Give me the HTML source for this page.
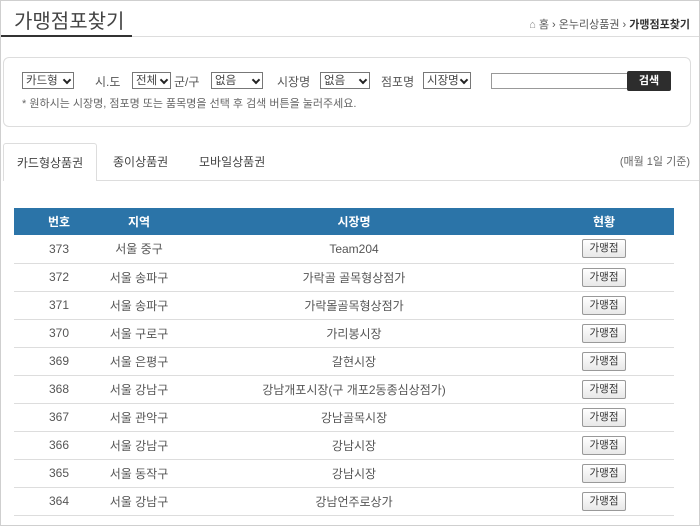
<!DOCTYPE html>
<html><head><meta charset="utf-8"><style>
*{margin:0;padding:0;box-sizing:border-box}
body{width:700px;height:526px;background:#fff;font-family:"Liberation Sans","Noto Sans CJK KR",sans-serif;color:#555;font-size:12px;position:relative;overflow:hidden}
.frame{position:absolute;left:0;top:0;width:700px;height:526px;border:1px solid #cfcfcf}
.title{position:absolute;left:14px;top:5px;font-size:20px;color:#444}
.tline{position:absolute;left:1px;top:36px;width:698px;height:1px;background:#ddd}
.tline2{position:absolute;left:1px;top:35px;width:131px;height:2px;background:#333}
.bc{position:absolute;right:10px;top:16px;font-size:11px;color:#555}
.bc b{color:#333}
.box{position:absolute;left:3px;top:57px;width:688px;height:70px;border:1px solid #ddd;border-radius:6px}
.sel{position:absolute;top:72px;height:17px;border:1px solid #777;font-size:11.5px;color:#444;padding:1px 3px 0;line-height:15px;background:#fff}
.sel:after{content:"";position:absolute;right:3px;top:4px;width:4px;height:4px;border-right:2px solid #222;border-bottom:2px solid #222;transform:rotate(45deg)}
.lb{position:absolute;top:73px;font-size:12px;color:#555}
.inp{position:absolute;left:491px;top:73px;width:137px;height:16px;border:1px solid #999}
.btn{position:absolute;left:627px;top:71px;width:44px;height:20px;background:#2d2d2d;color:#fff;font-size:11px;font-weight:bold;text-align:center;line-height:20px;border-radius:2px}
.note{position:absolute;left:22px;top:95px;font-size:11px;color:#666}
.tab{position:absolute;top:143px;height:38px;line-height:38px;font-size:12px;color:#444}
.tab1{left:3px;width:94px;border:1px solid #ddd;border-bottom:none;background:#fff;text-align:center;border-radius:3px 3px 0 0}
.tabline{position:absolute;left:97px;top:180px;width:602px;height:1px;background:#ddd}
table{position:absolute;left:14px;top:208px;width:660px;border-collapse:collapse}
th{background:#2b74a8;color:#fff;height:27px;font-size:12px;font-weight:bold}
td{height:28px;border-bottom:1px solid #ddd;text-align:center;color:#555;font-size:12px}
.b{display:inline-block;width:44px;height:19px;border:1px solid #999;border-radius:2px;background:linear-gradient(#fff,#e8e8e8);font-size:10.5px;line-height:17px;color:#333}
</style></head><body>
<div class="frame"></div>
<div class="title">가맹점포찾기</div>
<div class="tline"></div><div class="tline2"></div>
<div class="bc"><span style="color:#888">⌂</span> 홈 › 온누리상품권 › <b>가맹점포찾기</b></div>
<div class="box"></div>
<div class="sel" style="left:22px;width:52px">카드형</div>
<div class="lb" style="left:95px">시.도</div>
<div class="sel" style="left:132px;width:39px">전체</div>
<div class="lb" style="left:174px">군/구</div>
<div class="sel" style="left:211px;width:52px">없음</div>
<div class="lb" style="left:277px">시장명</div>
<div class="sel" style="left:320px;width:50px">없음</div>
<div class="lb" style="left:381px">점포명</div>
<div class="sel" style="left:423px;width:48px">시장명</div>
<div class="inp"></div>
<div class="btn">검색</div>
<div class="note">* 원하시는 시장명, 점포명 또는 품목명을 선택 후 검색 버튼을 눌러주세요.</div>
<div class="tab tab1">카드형상품권</div>
<div class="tab" style="left:113px">종이상품권</div>
<div class="tab" style="left:199px">모바일상품권</div>
<div class="tab" style="right:10px;font-size:11px;color:#666">(매월 1일 기준)</div>
<div class="tabline"></div>
<table>
<tr><th style="width:90px">번호</th><th style="width:70px">지역</th><th>시장명</th><th style="width:140px">현황</th></tr>
<tr><td>373</td><td>서울 중구</td><td>Team204</td><td><span class="b">가맹점</span></td></tr>
<tr><td>372</td><td>서울 송파구</td><td>가락골 골목형상점가</td><td><span class="b">가맹점</span></td></tr>
<tr><td>371</td><td>서울 송파구</td><td>가락몰골목형상점가</td><td><span class="b">가맹점</span></td></tr>
<tr><td>370</td><td>서울 구로구</td><td>가리봉시장</td><td><span class="b">가맹점</span></td></tr>
<tr><td>369</td><td>서울 은평구</td><td>갈현시장</td><td><span class="b">가맹점</span></td></tr>
<tr><td>368</td><td>서울 강남구</td><td>강남개포시장(구 개포2동종심상점가)</td><td><span class="b">가맹점</span></td></tr>
<tr><td>367</td><td>서울 관악구</td><td>강남골목시장</td><td><span class="b">가맹점</span></td></tr>
<tr><td>366</td><td>서울 강남구</td><td>강남시장</td><td><span class="b">가맹점</span></td></tr>
<tr><td>365</td><td>서울 동작구</td><td>강남시장</td><td><span class="b">가맹점</span></td></tr>
<tr><td>364</td><td>서울 강남구</td><td>강남언주로상가</td><td><span class="b">가맹점</span></td></tr>
</table>
</body></html>
